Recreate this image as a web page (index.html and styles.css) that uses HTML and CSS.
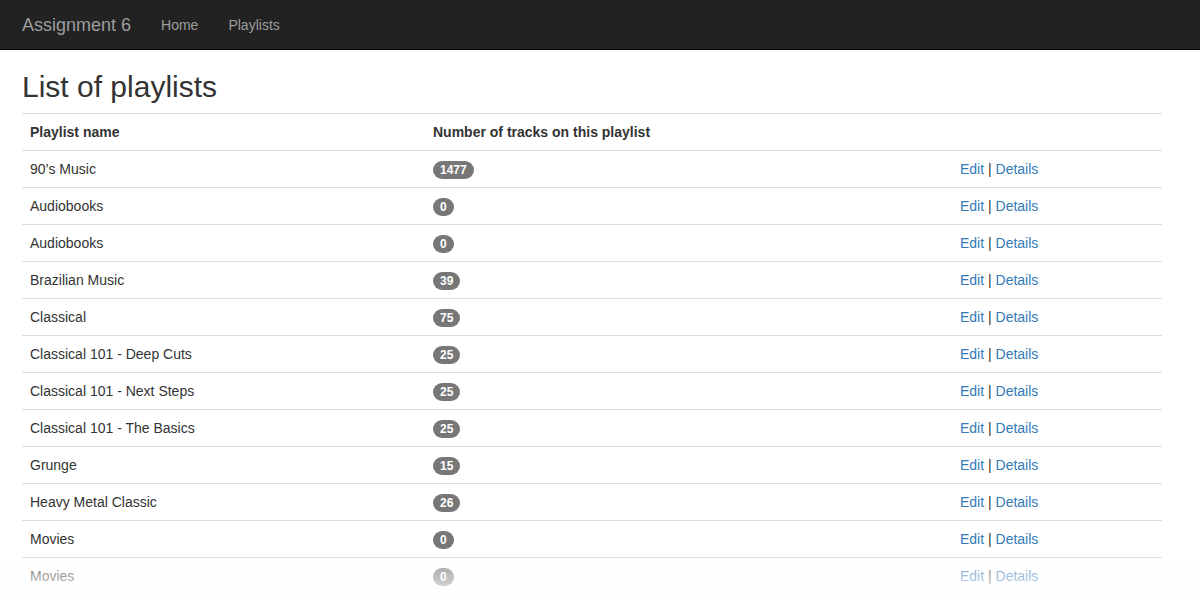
FILE: index.html
```html
<!DOCTYPE html>
<html>
<head>
<meta charset="utf-8">
<title>List of playlists</title>
<link rel="stylesheet" href="styles.css">
</head>
<body>
<nav class="navbar">
  <div class="container nav-inner">
    <a class="brand" href="#">Assignment 6</a>
    <ul class="nav">
      <li><a href="#">Home</a></li>
      <li><a href="#">Playlists</a></li>
    </ul>
  </div>
</nav>
<main class="container body-content">
  <h2 class="title">List of playlists</h2>
  <table class="table">
    <tr><th class="c1">Playlist name</th><th class="c2">Number of tracks on this playlist</th><th class="c3"></th></tr>
    <tr><td>90’s Music</td><td><span class="badge">1477</span></td><td><a href="#">Edit</a> | <a href="#">Details</a></td></tr>
    <tr><td>Audiobooks</td><td><span class="badge">0</span></td><td><a href="#">Edit</a> | <a href="#">Details</a></td></tr>
    <tr><td>Audiobooks</td><td><span class="badge">0</span></td><td><a href="#">Edit</a> | <a href="#">Details</a></td></tr>
    <tr><td>Brazilian Music</td><td><span class="badge">39</span></td><td><a href="#">Edit</a> | <a href="#">Details</a></td></tr>
    <tr><td>Classical</td><td><span class="badge">75</span></td><td><a href="#">Edit</a> | <a href="#">Details</a></td></tr>
    <tr><td>Classical 101 - Deep Cuts</td><td><span class="badge">25</span></td><td><a href="#">Edit</a> | <a href="#">Details</a></td></tr>
    <tr><td>Classical 101 - Next Steps</td><td><span class="badge">25</span></td><td><a href="#">Edit</a> | <a href="#">Details</a></td></tr>
    <tr><td>Classical 101 - The Basics</td><td><span class="badge">25</span></td><td><a href="#">Edit</a> | <a href="#">Details</a></td></tr>
    <tr><td>Grunge</td><td><span class="badge">15</span></td><td><a href="#">Edit</a> | <a href="#">Details</a></td></tr>
    <tr><td>Heavy Metal Classic</td><td><span class="badge">26</span></td><td><a href="#">Edit</a> | <a href="#">Details</a></td></tr>
    <tr><td>Movies</td><td><span class="badge">0</span></td><td><a href="#">Edit</a> | <a href="#">Details</a></td></tr>
    <tr><td>Movies</td><td><span class="badge">0</span></td><td><a href="#">Edit</a> | <a href="#">Details</a></td></tr>
  </table>
</main>
<div class="fade"></div>
</body>
</html>
```
FILE: styles.css
```css
html, body {
  margin: 0;
  padding: 0;
  height: 600px;
  overflow: hidden;
}
body {
  font-family: "Liberation Sans", Arial, Helvetica, sans-serif;
  font-size: 14px;
  line-height: 1.42857;
  color: #333;
  background: #fff;
}
a {
  color: #337ab7;
  text-decoration: none;
}
.container {
  width: 1140px;
  margin-left: 22px;
}
.navbar {
  background: #222;
  border-bottom: 1px solid #080808;
  height: 49px;
}
.nav-inner {
  display: flex;
  align-items: center;
  height: 50px;
}
.brand {
  color: #9d9d9d;
  font-size: 18px;
  line-height: 20px;
  padding: 15px 15px 15px 0;
}
.nav {
  display: flex;
  list-style: none;
  margin: 0;
  padding: 0;
}
.nav a {
  display: block;
  color: #9d9d9d;
  padding: 15px;
  line-height: 20px;
}
.title {
  font-size: 30px;
  font-weight: 500;
  line-height: 33px;
  margin: 20px 0 10px;
  color: #333;
}
.table {
  width: 100%;
  border-collapse: collapse;
  border-spacing: 0;
}
.table th, .table td {
  padding: 8px;
  height: 20px;
  line-height: 20px;
  text-align: left;
  vertical-align: top;
  border-top: 1px solid #ddd;
}
.table th {
  font-weight: bold;
}
.c1 { width: 387px; }
.c2 { width: 511px; }
.badge {
  display: inline-block;
  padding: 3px 7px;
  margin: -3px 0;
  font-size: 12px;
  font-weight: bold;
  line-height: 12px;
  color: #fff;
  text-align: center;
  white-space: nowrap;
  vertical-align: middle;
  background-color: #777;
  border-radius: 10px;
}
.fade {
  position: fixed;
  left: 0;
  right: 0;
  bottom: 0;
  height: 40px;
  background: linear-gradient(rgba(255,255,255,0.3), rgba(255,255,255,0.85));
  pointer-events: none;
}
```
